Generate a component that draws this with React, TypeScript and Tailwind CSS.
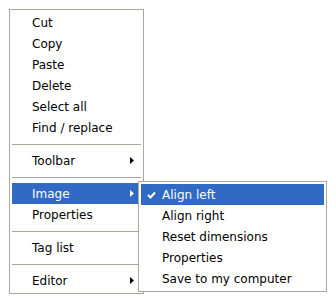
import React from "react";

type Item = { label: string; sub?: boolean; active?: boolean } | "sep";

const mainItems: Item[] = [
  { label: "Cut" },
  { label: "Copy" },
  { label: "Paste" },
  { label: "Delete" },
  { label: "Select all" },
  { label: "Find / replace" },
  "sep",
  { label: "Toolbar", sub: true },
  "sep",
  { label: "Image", sub: true, active: true },
  { label: "Properties" },
  "sep",
  { label: "Tag list" },
  "sep",
  { label: "Editor", sub: true },
];

const subItems = [
  { label: "Align left", checked: true, active: true },
  { label: "Align right" },
  { label: "Reset dimensions" },
  { label: "Properties" },
  { label: "Save to my computer" },
];

const Arrow = ({ white }: { white?: boolean }) => (
  <svg width="4" height="7" viewBox="0 0 4 7" className="shrink-0">
    <path d="M0 0 L4 3.5 L0 7 Z" fill={white ? "#ffffff" : "#000000"} />
  </svg>
);

const Check = () => (
  <svg width="9" height="8" viewBox="0 0 9 8" className="absolute left-[6px] top-[7px]">
    <path d="M1 4 L3.5 6.5 L8 1.5" stroke="#ffffff" strokeWidth="2" fill="none" />
  </svg>
);

export default function App() {
  return (
    <div
      className="relative w-[336px] h-[299px] bg-white pt-[9px] pl-[9px] text-[12px] text-black"
      style={{ fontFamily: '"DejaVu Sans", sans-serif' }}
    >
      {/* main context menu */}
      <div className="w-[135px] border border-[#aca899] bg-white p-[2px]">
        {mainItems.map((it, i) =>
          it === "sep" ? (
            <div key={i} className="h-[12px] pt-[6px]">
              <div className="h-px bg-[#aca899]" />
            </div>
          ) : (
            <div
              key={i}
              className={
                "h-[21px] flex items-center justify-between pl-[20px] pr-[7px] " +
                (it.active ? "bg-[#316ac5] text-white" : "")
              }
            >
              <span>{it.label}</span>
              {it.sub && <Arrow white={it.active} />}
            </div>
          )
        )}
      </div>

      {/* Image submenu */}
      <div className="absolute left-[138px] top-[181px] w-[189px] border border-[#aca899] bg-white p-[2px]">
        {subItems.map((it, i) => (
          <div
            key={i}
            className={
              "relative h-[21px] flex items-center pl-[21px] " +
              (it.active ? "bg-[#316ac5] text-white" : "")
            }
          >
            {it.checked && <Check />}
            <span>{it.label}</span>
          </div>
        ))}
      </div>
    </div>
  );
}
